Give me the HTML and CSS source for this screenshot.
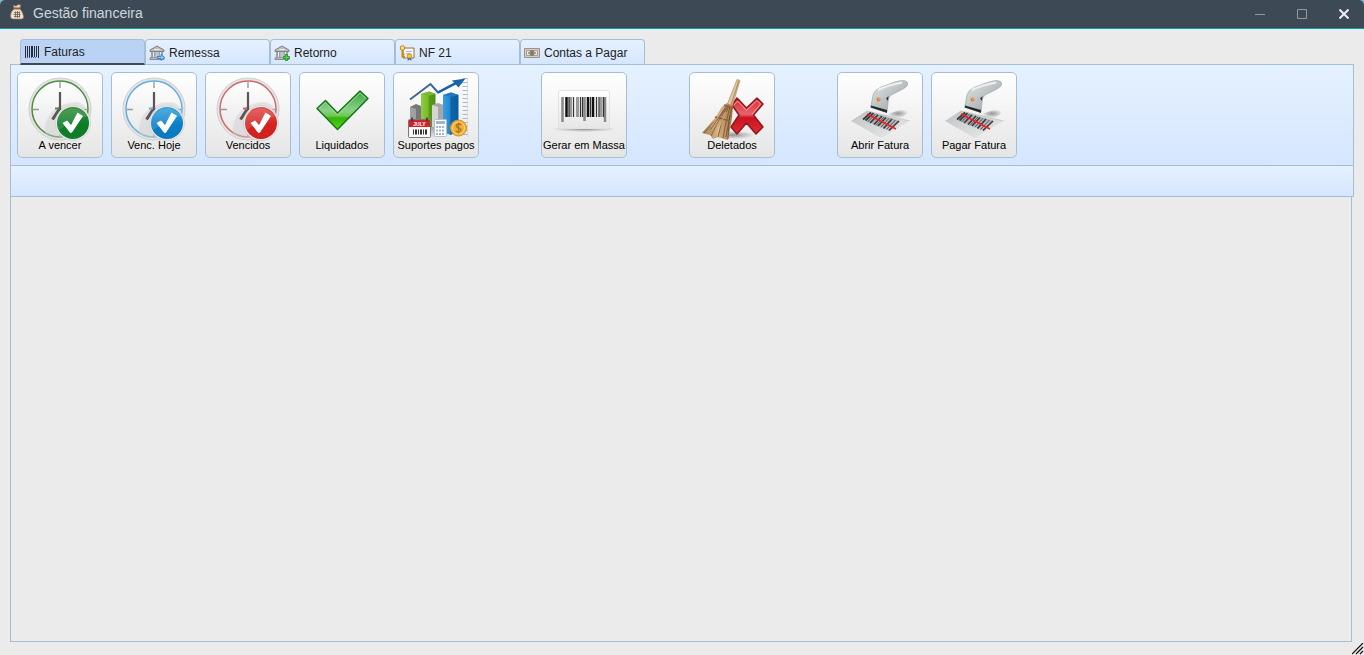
FILE: index.html
```html
<!DOCTYPE html>
<html lang="pt-BR">
<head>
<meta charset="utf-8">
<title>Gestão financeira</title>
<link rel="stylesheet" href="styles.css">
</head>
<body>
<svg class="defs" aria-hidden="true">
  <defs>
    <linearGradient id="face" x1="0" y1="0" x2="0" y2="1"><stop offset="0" stop-color="#fff"/><stop offset="1" stop-color="#e6e6e6"/></linearGradient>
    <linearGradient id="greenBadge" x1="0" y1="0" x2="0" y2="1"><stop offset="0" stop-color="#37923d"/><stop offset="0.55" stop-color="#0b7d25"/><stop offset="1" stop-color="#127c2b"/></linearGradient>
    <linearGradient id="blueBadge" x1="0" y1="0" x2="0" y2="1"><stop offset="0" stop-color="#38a3dc"/><stop offset="0.55" stop-color="#0a7fc8"/><stop offset="1" stop-color="#0879bd"/></linearGradient>
    <linearGradient id="redBadge" x1="0" y1="0" x2="0" y2="1"><stop offset="0" stop-color="#e0514d"/><stop offset="0.55" stop-color="#d32420"/><stop offset="1" stop-color="#cf211d"/></linearGradient>
    <linearGradient id="tick" x1="0" y1="0" x2="0" y2="1"><stop offset="0" stop-color="#39a839"/><stop offset="0.5" stop-color="#8bd08a"/><stop offset="0.65" stop-color="#6acb4b"/><stop offset="0.7" stop-color="#36b20d"/><stop offset="1" stop-color="#4fdb0b"/></linearGradient>
    <linearGradient id="cross" x1="0" y1="0" x2="0" y2="1"><stop offset="0" stop-color="#da2733"/><stop offset="0.45" stop-color="#e8646b"/><stop offset="0.55" stop-color="#c91420"/><stop offset="1" stop-color="#e22b30"/></linearGradient>
    <linearGradient id="bristle" x1="0" y1="0" x2="1" y2="0"><stop offset="0" stop-color="#a47a4c"/><stop offset="0.5" stop-color="#d5b080"/><stop offset="1" stop-color="#a3764a"/></linearGradient>
    <linearGradient id="metal" x1="0" y1="0" x2="1" y2="1"><stop offset="0" stop-color="#e3e7e8"/><stop offset="0.5" stop-color="#bcc2c4"/><stop offset="1" stop-color="#92999b"/></linearGradient>
    <linearGradient id="paper" x1="0" y1="0" x2="1" y2="1"><stop offset="0" stop-color="#bfc2c4"/><stop offset="1" stop-color="#eceded"/></linearGradient>
    <linearGradient id="blueBar" x1="0" y1="0" x2="1" y2="0"><stop offset="0" stop-color="#3a9fe0"/><stop offset="0.45" stop-color="#2388d0"/><stop offset="0.5" stop-color="#0d65ac"/><stop offset="1" stop-color="#0a5ba0"/></linearGradient>
    <linearGradient id="greenBar" x1="0" y1="0" x2="1" y2="0"><stop offset="0" stop-color="#90cc45"/><stop offset="0.5" stop-color="#78bb28"/><stop offset="0.55" stop-color="#579c19"/><stop offset="1" stop-color="#4d9014"/></linearGradient>
    <radialGradient id="shade"><stop offset="0" stop-color="#000" stop-opacity="0.38"/><stop offset="1" stop-color="#000" stop-opacity="0"/></radialGradient>

    <symbol id="clock" viewBox="0 0 70 66">
      <circle cx="35" cy="33" r="31" fill="#e4e4e4" stroke="#cfcfcf"/>
      <circle cx="35" cy="33" r="28" fill="url(#face)" stroke="currentColor" stroke-width="1.5"/>
      <path d="M35 6v6M35 55v6M8 33.500h6M56 33.500h6" stroke="#999" stroke-width="1.4"/>
      <path d="M20 58C18 38 34 26 52 26C60 27 62 34 62 38L52 60C42 63 27 63 20 58Z" fill="#cfcfcf" opacity="0.45"/>
      <path d="M35 16V34" stroke="#5b5554" stroke-width="2.2"/>
      <path d="M35 32L27.500 43.500" stroke="#5b5554" stroke-width="3"/>
      <path d="M30 32.500h4" stroke="currentColor" stroke-width="2"/>
      <circle cx="48" cy="47" r="17.500" fill="#e8e8e8" stroke="#cfcfcf" stroke-width="0.700"/>
    </symbol>
    <symbol id="check" viewBox="0 0 70 66">
      <path d="M32 40Q48 25 63 40Q50 43 34 54Q30 46 32 40Z" fill="#fff" opacity="0.12"/>
      <path d="M37.500 47L42 44.500L46 49L52.500 36.500L58 40L47 56.500Q45.500 57.500 44.500 56Z" fill="#fff"/>
    </symbol>
    <symbol id="scanner" viewBox="0 0 70 66">
      <path d="M42 39Q50 34 64 33Q63 38 56 42L42 41Z" fill="url(#shade)"/>
      <path d="M6 45.500L22 35L65 45L36 63Z" fill="url(#paper)" stroke="#b5b8ba" stroke-width="0.600"/>
      <path d="M6 45.500L36 63L65 45" fill="none" stroke="#fafafa"/>
      <path d="M18 43.500L26 36.500L54 44.500L44 54.500Z" fill="#6f7173" opacity="0.35"/>
      <path d="M18 43.500L26 36.500M20.500 44.500L28.500 37.200M25 47L33 38.800M29 48.500L37 40M33 50L41 41.500M38.500 52.500L47 43M44 54.500L54 45" stroke="#3c3c3e" stroke-width="1.700"/>
      <path d="M22.500 46L30.500 38M31 49.500L39 41M35.800 51.300L44 42.300M41.500 53.500L50.500 44" stroke="#4a4a4c" stroke-width="0.900"/>
      <path d="M22 38L51 53" stroke="#ee2026" stroke-width="1.500"/>
      <path d="M26 30L28 19Q29 14 36 11L50 6Q60 3 62.500 6.500Q63.500 10 58 13L48 18Q43 20 43 27L42 36Z" fill="url(#metal)" stroke="#969da0" stroke-width="0.600"/>
      <path d="M33 14Q43 9 57 6.500" stroke="#eef1f2" stroke-width="2" fill="none"/>
      <path d="M26 29.500L42 34V37L25.500 31.500Z" fill="#28292a"/>
      <path d="M43.500 20L41 22.500L43 25Z" fill="#343638"/>
      <circle cx="33.500" cy="23.500" r="2" fill="#ee7621"/>
      <circle cx="34" cy="23" r="0.600" fill="#fff"/>
    </symbol>
    <symbol id="bank" viewBox="0 0 16 16">
      <path d="M1 5L8 1L15 5V6.500H1Z" fill="#bdbdbd" stroke="#777" stroke-width="0.900"/>
      <path d="M5.500 4.500h5" stroke="#eee"/>
      <path d="M3 7V12.500M6.300 7V12.500M9.700 7V12.500M13 7V12.500" stroke="#777" stroke-width="2"/>
      <path d="M3 7V12.500M6.300 7V12.500M9.700 7V12.500M13 7V12.500" stroke="#ddd" stroke-width="0.800"/>
      <path d="M1 12.800H15V14.500H1Z" fill="#ccc" stroke="#777" stroke-width="0.800"/>
    </symbol>
  </defs>
</svg>

<main class="window">
  <header class="titlebar">
    <svg class="title-icon" viewBox="0 0 16 16" aria-hidden="true">
      <path d="M5 4L4 1L7 2L9 0.500L12 1L11 4Z" fill="#e6d4bd" stroke="#75604b" stroke-width="0.600"/>
      <path d="M5 5Q1.500 8 1.500 12Q1.500 15 4 15H12.500Q15 15 14.500 12Q14 8 11 5Z" fill="#eee0ce" stroke="#8c765f" stroke-width="0.600"/>
      <path d="M4.500 4.500H11.500" stroke="#965c2c" stroke-width="1.500"/>
      <path d="M5 8.500h6M4.500 10.500h7M5 12.500h6M6.500 7.500v6M8.500 7v7M10.500 7.500v6" stroke="#6d5a4b" stroke-width="0.800"/>
    </svg>
    <h1 class="title">Gestão financeira</h1>
    <div class="controls">
      <button class="control" type="button" aria-label="Minimizar"><svg class="control-icon" viewBox="0 0 10 10"><path d="M0 5.500H10" stroke="#999"/></svg></button>
      <button class="control" type="button" aria-label="Maximizar"><svg class="control-icon" viewBox="0 0 10 10"><path d="M0.500 0.500h9v9h-9Z" fill="none" stroke="#999"/></svg></button>
      <button class="control" type="button" aria-label="Fechar"><svg class="control-icon" viewBox="0 0 10 10"><path d="M0.500 0.500L9.500 9.500M9.500 0.500L0.500 9.500" stroke="#eee" stroke-width="2"/></svg></button>
    </div>
  </header>

  <div class="content">
    <div class="tabs" role="tablist">
      <button class="tab tab-active" type="button" role="tab" aria-selected="true">
        <svg class="tab-icon" viewBox="0 0 16 16" aria-hidden="true"><path d="M1.500 2V14M3.500 2V13M5.500 2V13M10.500 2V13M12.500 2V13M14.500 2V14" stroke="#252d3c"/><path d="M8 2V13" stroke="#252d3c" stroke-width="2"/><path d="M3 13.500h10" stroke="#56637c" stroke-dasharray="1 1"/></svg>
        Faturas
      </button>
      <button class="tab" type="button" role="tab" aria-selected="false">
        <svg class="tab-icon" viewBox="0 0 16 16" aria-hidden="true"><use href="#bank"/><path d="M8.500 11.500H12V9.500L15.700 12.500L12 15.500V13.500H8.500Z" fill="#8bcdf6" stroke="#2173bd" stroke-width="0.800"/></svg>
        Remessa
      </button>
      <button class="tab" type="button" role="tab" aria-selected="false">
        <svg class="tab-icon" viewBox="0 0 16 16" aria-hidden="true"><use href="#bank"/><path d="M11.500 9.500h2v2h2v2h-2v2h-2v-2h-2v-2h2Z" fill="#52d740" stroke="#188b1d" stroke-width="0.800"/></svg>
        Retorno
      </button>
      <button class="tab" type="button" role="tab" aria-selected="false">
        <svg class="tab-icon" viewBox="0 0 16 16" aria-hidden="true"><path d="M4 3H15V13H4Z" fill="#f5f8fc" stroke="#97723d"/><path d="M7 6.500h6M7 8.500h4" stroke="#aab9d2"/><path d="M3.500 5V12.500M3.500 9.500h2M3.500 12h2.500" stroke="#c28e16" stroke-width="2"/><circle cx="3.500" cy="3" r="2.300" fill="#ffe06a" stroke="#bf8915"/><path d="M9 12L8.500 16L10.500 14.500L12.500 16L12 12Z" fill="#376fcb"/><circle cx="10.500" cy="11" r="2.300" fill="#fbc52f" stroke="#b77b13" stroke-width="0.700"/></svg>
        NF 21
      </button>
      <button class="tab" type="button" role="tab" aria-selected="false">
        <svg class="tab-icon" viewBox="0 0 16 16" aria-hidden="true"><path d="M0.500 3.500h15v9h-15Z" fill="#d9cec5" stroke="#9b9088"/><path d="M2.500 5.500h11v5h-11Z" fill="#eee7e0" stroke="#a99c92"/><circle cx="8" cy="8" r="2.300" fill="#a6978b" stroke="#756a62"/><path d="M8 6.500v3M4 8h1M11 8h1" stroke="#5f554e"/></svg>
        Contas a Pagar
      </button>
    </div>

    <div class="toolbar" role="toolbar" aria-label="Faturas">
      <div class="group">
        <button class="tool" type="button">
          <svg class="tool-icon" viewBox="0 0 70 66" color="#4a8f3c" aria-hidden="true"><use href="#clock"/><circle cx="48" cy="47" r="16" fill="url(#greenBadge)"/><use href="#check"/></svg>
          <span class="label">A vencer</span>
        </button>
        <button class="tool" type="button">
          <svg class="tool-icon" viewBox="0 0 70 66" color="#62aedc" aria-hidden="true"><use href="#clock"/><circle cx="48" cy="47" r="16" fill="url(#blueBadge)"/><use href="#check"/></svg>
          <span class="label">Venc. Hoje</span>
        </button>
        <button class="tool" type="button">
          <svg class="tool-icon" viewBox="0 0 70 66" color="#d1686a" aria-hidden="true"><use href="#clock"/><circle cx="48" cy="47" r="16" fill="url(#redBadge)"/><use href="#check"/></svg>
          <span class="label">Vencidos</span>
        </button>
        <button class="tool" type="button">
          <svg class="tool-icon" viewBox="0 0 70 66" aria-hidden="true"><path d="M10 32.500L18.500 24.500L30.500 37L53 15L61 22.500L30.500 53.500Z" fill="url(#tick)" stroke="#18751c" stroke-width="1.500" stroke-linejoin="round"/><path d="M12 32.500L18.500 26.500L30.500 39L53 17L59 22.500" fill="none" stroke="#a9dfaa" stroke-width="0.800"/></svg>
          <span class="label">Liquidados</span>
        </button>
        <button class="tool" type="button">
          <svg class="tool-icon" viewBox="0 0 70 66" aria-hidden="true">
            <path d="M4 44L20 36L61 50L50 62H30Z" fill="url(#shade)"/>
            <path d="M66.500 3V61" stroke="#ccd1d6" stroke-width="0.600"/>
            <path d="M64 2V61" stroke="#abb7c5" stroke-width="5" stroke-dasharray="1 3"/>
            <path d="M9 31L15 28L20 30V48H9Z" fill="#777"/><path d="M9 31L15 33V48H9Z" fill="#a0a0a0"/>
            <path d="M20 18L28 15.500L34.500 18V51H20Z" fill="url(#greenBar)"/><path d="M20 18L28 15.500L34.500 18L27 20Z" fill="#79ba34"/>
            <path d="M31 29L37 27L42.500 29V51H31Z" fill="#a7a7a7"/><path d="M31 29L37 31V51H31Z" fill="#d5d5d5"/>
            <path d="M42 19L50 16.500L57.500 19V54L50 59L42 56Z" fill="url(#blueBar)"/><path d="M42 19L50 16.500L57.500 19L50 21Z" fill="#2178bb"/>
            <path d="M9 23.500L29.500 8L37 16.500L57 6" fill="none" stroke="#3d6890" stroke-width="2"/>
            <path d="M37 16.500L57 6" stroke="#1767a7" stroke-width="2.500"/><path d="M64.500 2.500L51 4.500L57.500 11.500Z" fill="#1767a7"/>
            <rect x="7.500" y="43.500" width="22" height="18" rx="1" fill="#f7f7f7" stroke="#777"/><path d="M8 44H29V51H8Z" fill="#ce232a"/><path d="M11 41.500V45M26 41.500V45" stroke="#333" stroke-width="1.500"/><text class="month" x="18.500" y="49.500">JULY</text><path d="M12 56H26" stroke="#333" stroke-width="5" stroke-dasharray="1 1 2 1"/>
            <rect x="33.500" y="43.500" width="12" height="17" rx="1" fill="#fff" stroke="#b5c0cb"/><path d="M35 46.500h9" stroke="#9eb5ca" stroke-width="3"/><path d="M35 51h9M35 54.500h9M35 58h9" stroke="#9eb5ca" stroke-width="2" stroke-dasharray="2 1"/>
            <circle cx="57.500" cy="52" r="8" fill="#eeb33a" stroke="#cf902b"/><circle cx="57.500" cy="52" r="6" fill="#efb13d" stroke="#ffd675"/><path d="M60.500 49Q57.500 46.500 55.500 49Q54.500 51 57.500 52Q61 53 59.500 55Q57 57 54.500 55M57.500 46.500V57.500" fill="none" stroke="#b4771d" stroke-width="1.400"/>
          </svg>
          <span class="label">Suportes pagos</span>
        </button>
      </div>
      <div class="group">
        <button class="tool" type="button">
          <svg class="tool-icon" viewBox="0 0 70 66" aria-hidden="true">
            <ellipse cx="35" cy="53" rx="32" ry="3" fill="url(#shade)"/>
            <rect x="9.500" y="14.500" width="51" height="38" rx="3" fill="url(#face)" stroke="#e1e1e1"/>
            <path d="M13.500 21V46M35.500 21V45M56 21V46" stroke="#888" stroke-width="2.500"/>
            <path d="M17.500 21V41M39 21V41M44 21V41" stroke="#111" stroke-width="2.500"/>
            <path d="M21.500 21V41M28.500 21V41M52 21V41" stroke="#9a9a9a" stroke-width="3"/>
            <path d="M20 21V41M24.500 21V41M31.500 21V41M33.500 21V41M41.500 21V41M47.500 21V41M50 21V41M54.500 21V41" stroke="#333" stroke-width="1.200"/>
          </svg>
          <span class="label">Gerar em Massa</span>
        </button>
      </div>
      <div class="group">
        <button class="tool" type="button">
          <svg class="tool-icon" viewBox="0 0 70 66" aria-hidden="true">
            <ellipse cx="36" cy="59" rx="22" ry="4" fill="url(#shade)"/>
            <path d="M35 29L40 22L49.500 32L60 22L66 28L56.500 39L66 51L59 58L49.500 47L40 58L34 51L42 39Z" fill="url(#cross)" stroke="#8c1a21" stroke-width="1.500" stroke-linejoin="round"/>
            <path d="M37 29L40.500 25L49.500 34.500L60 24.500L63.500 28L55 38.500" fill="none" stroke="#f6a9ac" stroke-width="0.900"/>
            <path d="M40 3.500L43 4.500L35 31L30 29Z" fill="#dfc69e" stroke="#a18158" stroke-width="0.600"/><path d="M41.800 5L34 29" stroke="#9b7b52" stroke-width="0.800"/>
            <path d="M30 27L36 30L35 42L31 64L21 61L16 63L13 59L5 57L18 42L25 31Z" fill="url(#bristle)"/>
            <path d="M30 30L19 44L7 57M31 30L22 44L14 60M32 30L25 45L21 61M33 31L29 46L26 62M35 31L32 45L31 63M28 33L13 54M33 39L29 61" fill="none" stroke="#6b492c" stroke-width="0.700"/>
            <path d="M27 29L36 32M18 41L33 45" stroke="#94613f" stroke-width="1.500"/><path d="M27 31Q24 37 14 51M29 36L20 57" stroke="#edcf9f" stroke-width="0.600" fill="none"/>
          </svg>
          <span class="label">Deletados</span>
        </button>
      </div>
      <div class="group">
        <button class="tool" type="button"><svg class="tool-icon" viewBox="0 0 70 66" aria-hidden="true"><use href="#scanner"/></svg><span class="label">Abrir Fatura</span></button>
        <button class="tool" type="button"><svg class="tool-icon" viewBox="0 0 70 66" aria-hidden="true"><use href="#scanner"/></svg><span class="label">Pagar Fatura</span></button>
      </div>
    </div>
    <div class="subbar"></div>
    <section class="workspace" aria-label="Conteúdo"></section>
  </div>
  <svg class="grip" viewBox="0 0 12 12" aria-hidden="true"><path d="M0 11L11 0M4 11L11 4M8 11L11 8" stroke="#111" stroke-width="1.200"/></svg>
</main>
</body>
</html>
```

FILE: styles.css
```css
* { box-sizing: border-box; }

body {
  margin: 0;
  background: #79b7d4;
  font-family: "Liberation Sans", Arial, sans-serif;
  color: #000;
}

button {
  margin: 0;
  font-family: inherit;
  color: inherit;
}

svg { display: block; }

.defs {
  position: absolute;
  width: 0;
  height: 0;
}

.window {
  position: relative;
  display: flex;
  flex-direction: column;
  min-height: 100vh;
  background: #ebebeb;
  border-radius: 5px 5px 0 0;
  overflow: hidden;
}

.titlebar {
  display: flex;
  align-items: center;
  height: 29px;
  padding: 0 9px;
  background: #3d4a56;
  border-bottom: 1px solid #0e98b2;
}

.title-icon {
  width: 16px;
  height: 16px;
  margin-bottom: 4px;
}

.title {
  margin: 0 auto 0 8px;
  padding-bottom: 2px;
  font-size: 14px;
  font-weight: 400;
  line-height: 16px;
  color: #ced6de;
}

.controls {
  display: flex;
  gap: 20px;
}

.control {
  padding: 6px;
  border: 0;
  background: none;
}

.control-icon {
  width: 10px;
  height: 10px;
}

.content {
  display: flex;
  flex: 1;
  flex-direction: column;
  padding: 10px 10px 13px;
}

.tabs {
  display: flex;
  padding-left: 10px;
}

.tab {
  display: flex;
  align-items: center;
  gap: 4px;
  width: 125px;
  height: 25px;
  padding: 2px 3px 0;
  border: 1px solid #a3bfd4;
  border-bottom: 0;
  border-radius: 4px 4px 0 0;
  background: linear-gradient(#e5f1ff, #d5e6ff);
  font-size: 12px;
  line-height: 14px;
  color: #222;
}

.tab-active {
  z-index: 1;
  height: 26px;
  margin-bottom: -1px;
  padding-top: 0;
  border-bottom: 2px solid #3d4a56;
  background: #bad3f5;
}

.tab-icon {
  width: 16px;
  height: 16px;
}

.toolbar {
  display: flex;
  gap: 62px;
  padding: 7px 6px;
  border: 1px solid #a3bfd4;
  background: linear-gradient(#e5f1ff, #d5e6ff);
}

.group {
  display: flex;
  gap: 8px;
}

.tool {
  display: flex;
  flex-direction: column;
  align-items: center;
  width: 86px;
  height: 86px;
  padding: 3px 0 0;
  border: 1px solid #a3bfd4;
  border-radius: 5px;
  background: linear-gradient(#fff, #e5e5e5);
}

.tool-icon {
  width: 70px;
  height: 66px;
}

.label {
  margin-top: -4px;
  font-size: 11px;
  line-height: 14px;
  white-space: nowrap;
}

.month {
  font-size: 5px;
  font-weight: 700;
  text-anchor: middle;
  fill: #fff;
}

.subbar {
  height: 31px;
  border: 1px solid #a3bfd4;
  border-top: 0;
  background: linear-gradient(#e5f1ff, #d5e6ff);
}

.workspace {
  flex: 1;
  margin-right: 2px;
  border: 1px solid #a3bfd4;
  border-top: 0;
}

.grip {
  position: absolute;
  right: 0;
  bottom: 0;
  width: 12px;
  height: 12px;
}
```
